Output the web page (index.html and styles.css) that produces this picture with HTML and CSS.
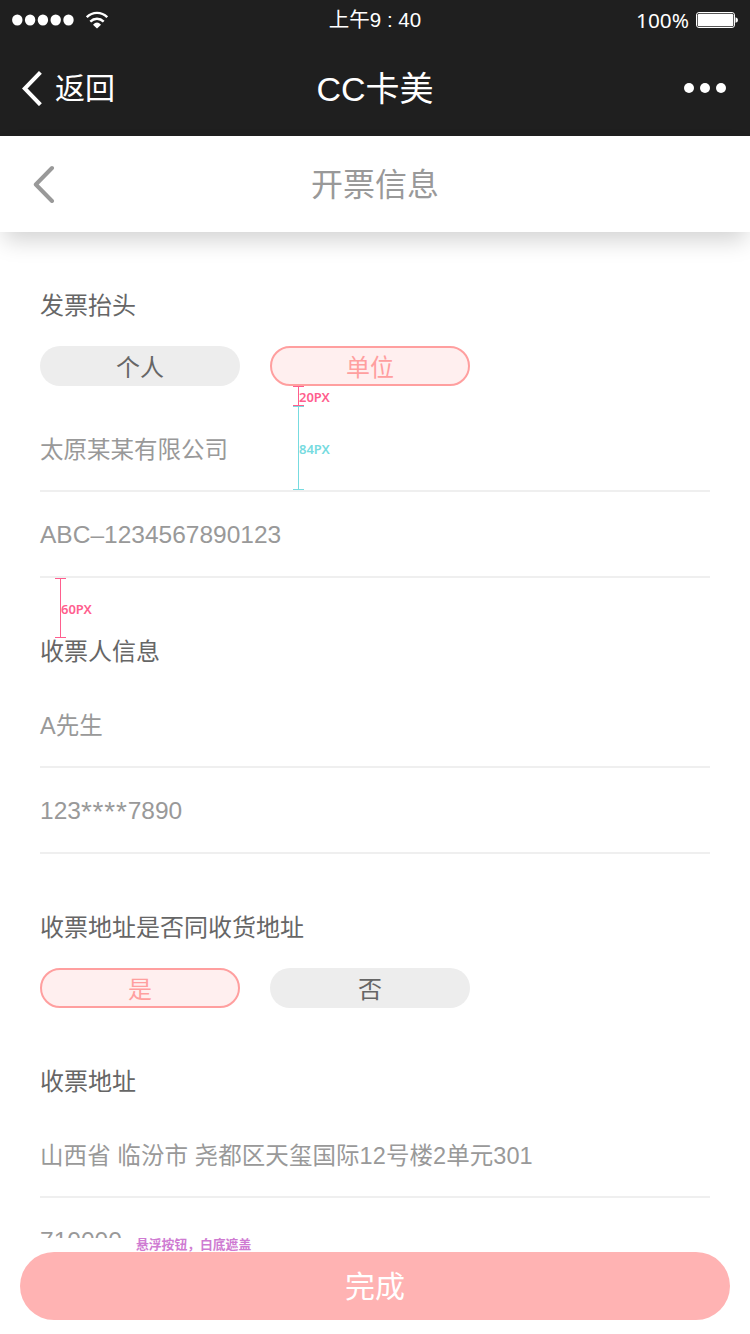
FILE: index.html
```html
<!DOCTYPE html>
<html lang="zh-CN">
<head>
<meta charset="utf-8">
<title>开票信息</title>
<link rel="stylesheet" href="styles.css">
</head>
<body>
<div class="screen">
  <header class="topbar">
    <div class="status">
      <div class="status-left">
        <svg width="62" height="12" viewBox="0 0 62 12" fill="#fff"><ellipse cx="5.3" cy="6" rx="5.2" ry="5.5"/><ellipse cx="18.1" cy="6" rx="5.2" ry="5.5"/><ellipse cx="30.9" cy="6" rx="5.2" ry="5.5"/><ellipse cx="43.7" cy="6" rx="5.2" ry="5.5"/><ellipse cx="56.5" cy="6" rx="5.2" ry="5.5"/></svg>
        <svg class="wifi" width="22" height="18" viewBox="0 0 22 18" fill="none" stroke="#fff" stroke-width="2.4"><path d="M.8 6.200C6.500.4 15.500.4 21.200 6.200"/><path d="M4.300 10.600C8.200 6.800 13.800 6.800 17.700 10.600"/><path d="M11 17.500 7 13.700Q11 9.500 15 13.700Z" fill="#fff" stroke="none"/></svg>
      </div>
      <div class="time">上午9 : 40</div>
      <div class="status-right">
        <span class="percent">100%</span>
        <svg width="42" height="16" viewBox="0 0 42 16"><rect x=".5" y=".5" width="38" height="15" rx="2.500" fill="none" stroke="#fff"/><rect x="1.700" y="1.700" width="35.600" height="12.600" rx="1.500" fill="#fff"/><path d="M39.500 5.200q2.500 .4 2.500 2.800t-2.500 2.800z" fill="#fff"/></svg>
      </div>
    </div>
    <nav class="nav">
      <div class="back">
        <svg width="21" height="36" viewBox="0 0 21 36" fill="none" stroke="#fff" stroke-width="4"><path d="M18.400 2.300 2.700 18.500 18.400 34.700"/></svg>
        <span>返回</span>
      </div>
      <h1 class="app-title">CC卡美</h1>
      <svg class="more" width="42" height="10" viewBox="0 0 42 10" fill="#fff"><circle cx="5" cy="5" r="5"/><circle cx="21" cy="5" r="5"/><circle cx="37" cy="5" r="5"/></svg>
    </nav>
  </header>
  <div class="page-head">
    <svg class="chevron" width="22" height="38" viewBox="0 0 22 38" fill="none" stroke="#999" stroke-width="4" stroke-linecap="round" stroke-linejoin="round"><path d="M19 3 2.800 19.500 19 36"/></svg>
    <h2 class="page-title">开票信息</h2>
  </div>
  <main class="form">
    <section class="group">
      <h3 class="label">发票抬头</h3>
      <div class="pills">
        <div class="pill">个人</div>
        <div class="pill active">单位</div>
      </div>
      <div class="fields">
        <div class="field cjk">太原某某有限公司</div>
        <div class="field latin">ABC–1234567890123</div>
      </div>
      <div class="measure m20"><span>20PX</span></div>
      <div class="measure m84"><span>84PX</span></div>
      <div class="measure m60"><span>60PX</span></div>
    </section>
    <section class="group">
      <h3 class="label">收票人信息</h3>
      <div class="fields">
        <div class="field cjk">A先生</div>
        <div class="field latin">123<span class="stars">****</span>7890</div>
      </div>
    </section>
    <section class="group">
      <h3 class="label">收票地址是否同收货地址</h3>
      <div class="pills">
        <div class="pill active">是</div>
        <div class="pill">否</div>
      </div>
    </section>
    <section class="group">
      <h3 class="label">收票地址</h3>
      <div class="fields">
        <div class="field cjk address">山西省 临汾市 尧都区天玺国际12号楼2单元301</div>
        <div class="field latin">710000</div>
      </div>
    </section>
  </main>
  <footer class="footer">
    <div class="note">悬浮按钮，白底遮盖</div>
    <div class="submit">完成</div>
  </footer>
</div>
</body>
</html>
```
FILE: styles.css
```css
* { box-sizing: border-box; }
body { margin: 0; background: #fff; }
svg { display: block; flex: none; }
h1, h2, h3 { margin: 0; font-weight: 400; }

.screen {
  position: relative;
  width: 750px;
  height: 1334px;
  overflow: hidden;
  font-family: "Liberation Sans", "Noto Sans CJK SC", sans-serif;
  color: #666;
}

.topbar { height: 136px; background: #1f1f1f; color: #fff; }
.status {
  display: grid;
  grid-template-columns: 1fr auto 1fr;
  align-items: center;
  height: 40px;
  padding: 0 12px;
}
.status-left { display: flex; align-items: center; gap: 12px; }
.wifi { margin-top: -1px; }
.time { font-size: 20.5px; line-height: 40px; }
.status-right { display: flex; align-items: center; justify-content: flex-end; gap: 7px; }
.percent { font-family: "Noto Sans", sans-serif; font-size: 20.8px; line-height: 40px; }

.nav {
  display: grid;
  grid-template-columns: 1fr auto 1fr;
  align-items: center;
  height: 96px;
  padding: 0 24px 0 22px;
}
.back { display: flex; align-items: center; gap: 12px; font-size: 30px; line-height: 40px; }
.back span { padding-top: 2px; }
.app-title { padding: 2px 0 0 2px; font-size: 34px; line-height: 48px; }
.more { justify-self: end; }

.page-head {
  display: grid;
  grid-template-columns: 1fr auto 1fr;
  align-items: center;
  height: 96px;
  padding: 0 33px;
  background: #fff;
  box-shadow: 0 12px 22px -4px rgba(0, 0, 0, 0.18);
}
.page-title { padding-top: 2px; font-size: 32px; line-height: 48px; color: #999; }

.form { display: flex; flex-direction: column; gap: 60px; padding: 60px 40px 0; }
.group { position: relative; }
.label { height: 24px; font-size: 24px; line-height: 27px; }
.pills { display: flex; gap: 30px; margin-top: 30px; }
.pill {
  width: 200px;
  height: 40px;
  border-radius: 20px;
  background: #ededed;
  font-size: 24px;
  line-height: 43px;
  text-align: center;
}
.pill.active {
  border: 2px solid #ff9f9f;
  background: #ffefef;
  color: #ff9f9f;
  line-height: 39px;
}
.fields { margin-top: 20px; }
.field {
  height: 86px;
  border-bottom: 2px solid #efefef;
  line-height: 88px;
  white-space: nowrap;
  color: #999;
}
.cjk { font-size: 23.5px; }
.address { letter-spacing: 0.07px; }
.latin { font-size: 24.5px; line-height: 86px; }
.stars { font-size: 28px; line-height: 1; letter-spacing: 0.8px; vertical-align: -2px; }

/* Spacing annotations laid over the form */
.measure {
  position: absolute;
  width: 11px;
  border: solid currentColor;
  border-width: 1px 0;
  font: 600 13px/14px "Noto Sans", sans-serif;
}
.measure::before {
  content: "";
  position: absolute;
  left: 5px;
  top: 0;
  bottom: 0;
  width: 1px;
  background: currentColor;
}
.measure span { position: absolute; left: 6px; top: calc(50% + 1px); transform: translateY(-50%); }
.m20 { left: 253px; top: 94px; height: 20px; color: #ff5e8e; }
.m84 { left: 253px; top: 114px; height: 84px; color: #77dbe0; }
.m60 { left: 15px; top: 286px; height: 60px; color: #ff5e8e; }

.footer {
  position: absolute;
  left: 0;
  right: 0;
  bottom: 0;
  height: 96px;
  padding: 0 20px;
  background: #fff;
}
.note {
  height: 14px;
  padding-left: 116px;
  font-size: 12.8px;
  font-weight: 700;
  line-height: 14px;
  color: #cf7bd2;
}
.submit {
  height: 68px;
  border-radius: 34px;
  background: #ffb3b3;
  color: #fff;
  font-size: 30px;
  line-height: 70px;
  text-align: center;
}
```
